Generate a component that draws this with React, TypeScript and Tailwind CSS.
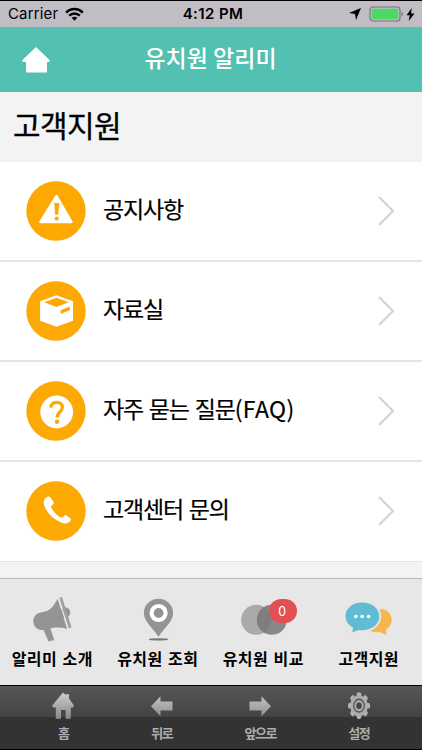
import React from 'react';

const NoticeIcon = () => (
  <svg viewBox="0 0 60 60" className="size-[60px] shrink-0">
    <circle cx="30" cy="30" r="29.7" fill="#fca903" />
    <path d="M30.5 15 45.5 41h-31z" fill="#fff" stroke="#fff" strokeWidth="2.4" strokeLinejoin="round" />
    <path d="M28.2 22h5l-1 11.8h-3z" fill="#fca903" />
    <circle cx="30.7" cy="37.5" r="2.1" fill="#fca903" />
  </svg>
);

const ArchiveIcon = () => (
  <svg viewBox="0 0 60 60" className="size-[60px] shrink-0">
    <circle cx="30" cy="30" r="29.7" fill="#fca903" />
    <path d="M30.5 14.3 47 20.3v19.500l-16.500 6-16.400-6V20.300z" fill="#fff" />
    <path d="M30.500 16.800 42.500 21.200l-12 4.800-12.300-4.800z" fill="#fca903" />
    <path d="m34.600 29.200 9.200-3.600v3.700l-9.200 3.800z" fill="#fca903" />
  </svg>
);

const FaqIcon = () => (
  <svg viewBox="0 0 60 60" className="size-[60px] shrink-0">
    <circle cx="30" cy="30" r="29.7" fill="#fca903" />
    <circle cx="30.7" cy="31" r="16.4" fill="#fff" />
    <path d="M24.8 26.6c.3-3.4 2.5-5.2 5.8-5.2 3.5 0 5.8 1.9 5.8 4.9 0 4.8-5.3 4.6-5.3 10.2" fill="none" stroke="#fca903" strokeWidth="3.3" />
    <circle cx="31" cy="40.8" r="2.2" fill="#fca903" />
  </svg>
);

const PhoneIcon = () => (
  <svg viewBox="0 0 60 60" className="size-[60px] shrink-0">
    <circle cx="30" cy="30" r="29.7" fill="#fca903" />
    <path
      d="M19.3 17.4c2-2 3.8-2.4 5-1.2l3.1 4.3c.8 1.3.3 2.3-.6 3-1.7 1.4-1.9 2.3-1.2 3.7 2.2 4 5 7 8.6 9 1.5.7 2.5.4 3.6-1 1-1.2 2-1.4 3.3-.5l2.9 2.3c1.2 1 1.1 2.2.1 3.3-2.2 2.3-5 2.7-8.4 1.400-8-3.200-14-9-17.200-16.500-1.200-3-1.200-5.800.8-7.800z"
      fill="#fff"
    />
  </svg>
);

const MegaphoneIcon = () => (
  <svg viewBox="0 0 50 52" className="ml-[3px] h-[52px] w-[50px]">
    <circle cx="36" cy="19.5" r="5.2" fill="#949494" />
    <path d="M13.5 35 21 34l4.2 13-5.6 1.5z" fill="#949494" />
    <path d="M28.6 5.8 38.3 35.9C31 33.8 24.5 34 18 36.4 10.3 38.5 5 35.2 4.4 29.5c-.8-6 3.3-10 9.6-10.6 6.6-.5 10.6-5.4 14.6-13.1z" fill="#949494" />
    <path d="m29.6 5.2 9.9 30.8" stroke="#eeeeee" strokeWidth="1.3" />
    <path d="m30.3 4.8 2.7-.7 9.6 30.4-3 .8z" fill="#a0a0a0" />
  </svg>
);

const PinIcon = () => (
  <svg viewBox="0 0 50 52" className="h-[52px] w-[50px]">
    <ellipse cx="25.5" cy="46.4" rx="9.8" ry="1.1" fill="#777" />
    <path d="M25.5 5.8c8.3 0 14.6 6.3 14.6 14.2 0 8.8-8.3 13.7-14.6 24-6.3-10.3-14.6-15.2-14.6-24 0-7.9 6.3-14.2 14.6-14.2z" fill="#949494" />
    <circle cx="25.6" cy="20" r="7" fill="#949494" stroke="#fff" strokeWidth="4.2" />
  </svg>
);

const CompareIcon = () => (
  <div className="relative h-[52px] w-[60px]">
    <svg viewBox="0 0 60 52" className="h-[52px] w-[60px]">
      <circle cx="22.2" cy="26.8" r="15" fill="#aaa" />
      <circle cx="37.8" cy="26.8" r="15" fill="#777" fillOpacity="0.85" />
    </svg>
    <span className="absolute top-[6px] left-[35px] flex h-[24px] w-[28px] items-center justify-center rounded-full bg-[#e35053] pr-px pb-px text-[14px] text-white">
      0
    </span>
  </div>
);

const ChatIcon = () => (
  <svg viewBox="0 0 50 52" className="h-[52px] w-[50px]">
    <path d="M36.5 15.8c6.8.8 11.2 5.3 11.2 11.3 0 4.2-2.2 7.5-5.8 9.6l.8 5.2-6.8-2.6c-5 .3-9-.5-12-3z" fill="#f7b64d" />
    <path
      d="M18 9.5c10 0 17.3 5.8 17.3 13.8S28 37.2 18 37.2c-1.1 0-2.2 0-3.2-.2L8.2 39.4l1-4.7C4.5 32.4 1.5 28.3 1.5 23.3 1.5 15.3 8.5 9.5 18 9.5z"
      fill="#60bcd4"
      stroke="#e7e7e7"
      strokeWidth="3.6"
      paintOrder="stroke"
    />
    <circle cx="11.8" cy="23.5" r="1.8" fill="#fff" />
    <circle cx="18.2" cy="23.5" r="1.8" fill="#fff" />
    <circle cx="24.6" cy="23.5" r="1.8" fill="#fff" />
  </svg>
);

const gearTeeth = [0, 45, 90, 135, 180, 225, 270, 315];

const ToolIcon: React.FC<{ name: string }> = ({ name }) => (
  <svg viewBox="0 0 24 30" className="h-[30px] w-[24px]">
    <defs>
      <linearGradient id={`metal-${name}`} x1="0" y1="0" x2="0" y2="30" gradientUnits="userSpaceOnUse">
        <stop offset="0.1" stopColor="#c8c8c8" />
        <stop offset="1" stopColor="#838383" />
      </linearGradient>
    </defs>
    <g fill={`url(#metal-${name})`}>
      {name === 'home' && <path d="m12 1.5 2.6 2.3v-.6H18v4.400l5 6.900-1 2h-2.200v11.300h-5.200V19H10v8.800H4.800V16.500H2l-.8-2z" />}
      {name === 'back' && <path d="M1 15.200 10.500 5.300v5.300h12v8.800h-12v5.800z" />}
      {name === 'forward' && <path d="M23 15.200 13.500 5.300v5.300h-12v8.800h12v5.800z" />}
      {name === 'settings' && (
        <g transform="translate(12 14.7) scale(1 1.2)">
          {gearTeeth.map((angle) => (
            <rect key={angle} x="-2.300" y="-11" width="4.600" height="5" rx="1.500" fill="#b4b4b4" transform={`rotate(${angle})`} />
          ))}
          <circle r="8.800" fill="#acacac" />
          <circle r="5.300" fill="none" stroke="#555" strokeWidth="1.300" />
          <circle r="2.700" fill="#444" />
        </g>
      )}
    </g>
  </svg>
);

const menuItems = [
  { label: '공지사항', icon: <NoticeIcon /> },
  { label: '자료실', icon: <ArchiveIcon /> },
  { label: '자주 묻는 질문', suffix: '(FAQ)', icon: <FaqIcon /> },
  { label: '고객센터 문의', icon: <PhoneIcon /> },
];

const tabs = [
  { label: '알리미 소개', icon: <MegaphoneIcon /> },
  { label: '유치원 조회', icon: <PinIcon /> },
  { label: '유치원 비교', icon: <CompareIcon /> },
  { label: '고객지원', icon: <ChatIcon /> },
];

const tools = [
  { label: '홈', name: 'home' },
  { label: '뒤로', name: 'back' },
  { label: '앞으로', name: 'forward' },
  { label: '설정', name: 'settings' },
];

const StatusBar = () => (
  <div className="grid h-[27px] grid-cols-3 items-center border-t border-black bg-[#c0bdc4] pt-px pr-[7px] pl-2 font-['Inter',sans-serif] text-black">
    <div className="flex items-center gap-[7px] text-[15px] tracking-[0.15px]">
      Carrier
      <svg viewBox="0 0 20 14" className="mb-px h-[14px] w-[19px]" fill="none" stroke="#000" strokeWidth="2.6">
        <path d="M1.2 5.6c5-5 12.6-5 17.6 0M4.4 8.8c3.2-3.2 8-3.2 11.2 0" />
        <path d="M7 11c1.7-1.5 4.3-1.5 6 0l-3 3z" fill="#000" stroke="none" />
      </svg>
    </div>
    <span className="pl-[3px] text-center text-[15px] font-semibold tracking-[0.4px] whitespace-nowrap">4:12 PM</span>
    <div className="mb-px flex items-center justify-end">
      <svg viewBox="0 0 12 12" className="mr-[8px] size-[12px]">
        <path d="M12 0 7 12 6 6 0 5z" />
      </svg>
      <svg viewBox="0 0 35 16" className="h-[16px] w-[35px]">
        <rect x="1" y="1" width="30" height="14" rx="3" fill="#c0bdc4" stroke="#77757b" strokeWidth="1.2" />
        <rect x="2.8" y="2.8" width="26.4" height="10.4" rx="1.4" fill="#4bd964" />
        <path d="M32.5 5.5c2 1 2 4 0 5z" fill="#77757b" />
      </svg>
      <svg viewBox="0 0 9 13" className="ml-[2px] h-[13px] w-[9px]">
        <path d="M5.8 0 .5 7.3h3.2L2.7 13 8.5 5.5H5z" />
      </svg>
    </div>
  </div>
);

export default function App() {
  return (
    <div className="flex h-[750px] w-[422px] flex-col overflow-hidden bg-[#f3f3f3] font-['Noto_Sans_CJK_KR',sans-serif] text-black">
      <StatusBar />

      <header className="grid h-[65px] grid-cols-[72px_1fr_72px] items-center bg-[#52c1b2] text-white">
        <svg viewBox="0 0 30 28" className="ml-[21px] h-[28px] w-[30px]" fill="#fff">
          <path d="M15 1 29 14.5l-1 1.5h-2v10.5H5V16H2l-1-1.5z" />
        </svg>
        <h1 className="mb-[5px] pr-px text-center text-[23px] leading-[34px] font-medium whitespace-nowrap">유치원 알리미</h1>
      </header>

      <h2 className="h-[70px] pl-[13px] text-[30px] leading-[64px] font-normal tracking-[-0.6px] [-webkit-text-stroke:0.3px_#000]">고객지원</h2>

      <ul>
        {menuItems.map((item) => (
          <li key={item.label} className="flex h-[100px] items-center border-b-2 border-[#e5e5e5] bg-white pr-[28px] pl-[26px] last:border-b last:pb-px">
            {item.icon}
            <span className="mb-[5px] ml-[17px] flex-1 text-[23px] tracking-[-1.2px] whitespace-nowrap [-webkit-text-stroke:0.2px_#000] [word-spacing:2px]">
              {item.label}
              {item.suffix && <span className="tracking-[0.4px]">{item.suffix}</span>}
            </span>
            <svg viewBox="0 0 16 30" className="h-[30px] w-[16px]" fill="none" stroke="#d2d2d2" strokeWidth="2">
              <path d="m1 1 14 14L1 29" />
            </svg>
          </li>
        ))}
      </ul>

      <nav className="mt-4 grid h-[107px] grid-cols-4 border-t border-[#b8b8b8] bg-[#e7e7e7] pt-[14px]">
        {tabs.map((tab) => (
          <div key={tab.label} className="flex flex-col items-center">
            {tab.icon}
            <span className="mt-[1px] mr-[1px] text-[16px] leading-6 font-bold tracking-[0.4px] whitespace-nowrap [word-spacing:1.5px]">{tab.label}</span>
          </div>
        ))}
      </nav>

      <footer className="flex h-[65px] justify-center border-y border-black bg-[linear-gradient(#565656,#444_31px,#333_31px,#333)]">
        {tools.map((tool) => (
          <div key={tool.label} className="flex w-[98.5px] flex-col items-center pt-[5px]">
            <ToolIcon name={tool.name} />
            <span className="mt-px text-[13px] leading-[22px] font-bold tracking-[-1.5px] text-[#adadad]">{tool.label}</span>
          </div>
        ))}
      </footer>
    </div>
  );
}
